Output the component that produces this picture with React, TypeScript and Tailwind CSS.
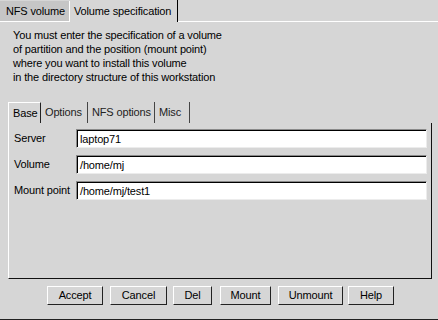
import React from "react"

const fields = [
  { label: "Server", value: "laptop71" },
  { label: "Volume", value: "/home/mj" },
  { label: "Mount point", value: "/home/mj/test1" },
]

const buttons = [
  { label: "Accept", cls: "w-[56px] ml-[47px]" },
  { label: "Cancel", cls: "w-[57px] ml-[7px]" },
  { label: "Del", cls: "w-[39px] ml-[6px]" },
  { label: "Mount", cls: "w-[51px] ml-[8px]" },
  { label: "Unmount", cls: "w-[65px] ml-[7px]" },
  { label: "Help", cls: "w-[46px] ml-[5px]" },
]

export default function App() {
  return (
    <div className="w-[438px] h-[320px] bg-[#d6d6d6] text-black text-[11px] tracking-[-0.15px] flex flex-col overflow-hidden font-['Liberation_Sans',Arial,sans-serif]">
      {/* top notebook tabs */}
      <div className="flex h-[22px] shrink-0">
        <div className="w-[70px] h-[21px] mt-[1px] bg-[#c6c6c6] border-r border-white border-b border-b-white flex items-center pl-[6px]">
          NFS volume
        </div>
        <div className="w-[108px] h-[22px] border-r border-black flex items-center pl-[4px]">
          Volume specification
        </div>
        <div className="flex-1 border-b border-white" />
      </div>

      {/* page */}
      <div className="flex-1 flex flex-col border-b border-[#222]">
        <div className="pl-[13px] pt-[6px] leading-[14px]">
          <div>You must enter the specification of a volume</div>
          <div>of partition and the position (mount point)</div>
          <div>where you want to install this volume</div>
          <div>in the directory structure of this workstation</div>
        </div>

        {/* inner notebook */}
        <div className="mt-[18px] ml-[8px] mr-[6px] flex flex-col">
          <div className="flex h-[21px] items-stretch">
            <div className="w-[33px] border-l border-t border-white border-r border-r-[#222] pl-[4px] flex items-center">Base</div>
            <div className="w-[47px] border-r border-[#444] pl-[4px] flex items-center text-[#222]">Options</div>
            <div className="w-[67px] border-r border-[#444] pl-[4px] flex items-center text-[#222]">NFS options</div>
            <div className="w-[35px] border-r border-[#444] pl-[4px] flex items-center text-[#222]">Misc</div>
          </div>
          <div className="h-[156px] border-l border-white border-r border-b border-r-[#111] border-b-[#111] pl-[5px] pr-[4px] pt-[6px] flex flex-col gap-[7px]">
            {fields.map((f) => (
              <div key={f.label} className="flex items-center h-[19px]">
                <div className="w-[62px] shrink-0 whitespace-nowrap">{f.label}</div>
                <div className="flex-1 h-[19px] border-t border-l border-[#8a8a8a] border-b border-r border-b-[#ececec] border-r-[#ececec]">
                  <div className="h-full bg-white border-t border-l border-black pl-[2px] flex items-center">{f.value}</div>
                </div>
              </div>
            ))}
          </div>
        </div>

        {/* buttons */}
        <div className="flex mt-[7px]">
          {buttons.map((b) => (
            <div
              key={b.label}
              className={`${b.cls} h-[19px] flex items-center justify-center border-t border-l border-white border-b border-r border-b-[#222] border-r-[#222]`}
            >
              {b.label}
            </div>
          ))}
        </div>
      </div>
    </div>
  )
}
